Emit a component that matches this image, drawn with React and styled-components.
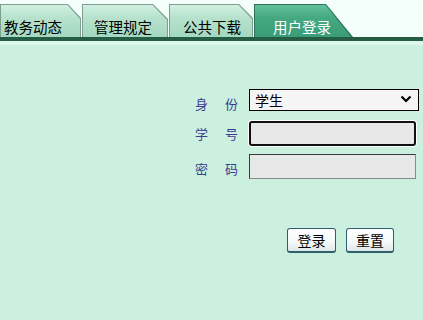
import React from 'react';
import styled, { createGlobalStyle } from 'styled-components';

const GlobalStyle = createGlobalStyle`
  html, body {
    margin: 0;
    padding: 0;
    background: #cbf0e0;
  }
  body {
    font-family: "Noto Sans CJK SC", "Liberation Sans", sans-serif;
  }
`;

const Page = styled.div`
  width: 423px;
  height: 320px;
  overflow: hidden;
  display: flex;
  flex-direction: column;
  background: #cbf0e0;
`;

const TabStrip = styled.div`
  display: flex;
  gap: 1px;
  padding-top: 4px;
  background: #f4fffb;
`;

const Tab = styled.div`
  position: relative;
  width: ${p => p.$width}px;
  height: 33px;
  box-sizing: border-box;
  padding-left: ${p => p.$pad}px;
  font-size: 14.5px;
  line-height: 1;
  color: ${p => (p.$active ? '#ffffff' : '#000000')};
  display: flex;
  align-items: flex-end;
  padding-bottom: 3px;
  background: ${p => (p.$active ? '#2c7457' : '#7d9e90')};
  clip-path: polygon(
    0 0,
    calc(100% - ${p => p.$sx}px) 0,
    100% ${p => p.$sy}px,
    100% 100%,
    0 100%
  );

  &::before {
    content: '';
    position: absolute;
    left: 1px;
    top: 1px;
    right: 1px;
    bottom: 0;
    background: ${p =>
      p.$active
        ? 'linear-gradient(#62c19c, #44a880 40%, #3a9d77)'
        : 'linear-gradient(#d2f0e2, #b6e2cd 40%, #a4d8c0)'};
    clip-path: polygon(
      0 0,
      calc(100% - ${p => p.$sx - 0.5}px) 0,
      100% ${p => p.$sy}px,
      100% 100%,
      0 100%
    );
  }
`;

const TabText = styled.span`
  position: relative;
`;

const Bar = styled.div`
  height: 4px;
  background: #245c44;
`;

const BarShine = styled.div`
  height: 4px;
  background: #dcf7ec;
`;

const Body = styled.div`
  flex: 1;
  display: flex;
  justify-content: flex-end;
  padding: 42px 4px 0 0;
`;

const Form = styled.div`
  display: flex;
  flex-direction: column;
  width: 224px;
`;

const Row = styled.div`
  display: flex;
  align-items: ${p => p.$align || 'center'};
  gap: 11px;
  margin-top: ${p => p.$top || 0}px;
`;

const Label = styled.div`
  width: 43px;
  flex: none;
  display: flex;
  justify-content: space-between;
  font-size: 13px;
  line-height: 14px;
  color: #3c3c8c;
  margin-bottom: ${p => p.$drop || 0}px;
`;

const SelectWrap = styled.div`
  position: relative;
  width: 170px;
  height: 22px;
`;

const Select = styled.select`
  appearance: none;
  width: 100%;
  height: 100%;
  box-sizing: border-box;
  border: 1px solid #000;
  border-radius: 0;
  background: #f5f5f5;
  font-family: "Noto Sans CJK SC", sans-serif;
  font-size: 14px;
  color: #000;
  padding: 0 0 0 5px;
  outline: none;
`;

const Chevron = styled.svg`
  position: absolute;
  right: 7px;
  top: 8px;
  pointer-events: none;
`;

const Input = styled.input`
  width: 167px;
  height: 25px;
  box-sizing: border-box;
  background: #e8e8e8;
  border: ${p => (p.$focus ? '2px solid #111' : '1px solid #3a3a3a')};
  border-right-color: ${p => (p.$focus ? '#111' : '#8a8a8a')};
  border-bottom-color: ${p => (p.$focus ? '#111' : '#8a8a8a')};
  border-radius: ${p => (p.$focus ? '3px' : '0')};
  box-shadow: ${p => (p.$focus ? '0 0 0 1px #fff' : 'none')};
  outline: none;
  padding: 0 4px;
`;

const Buttons = styled.div`
  display: flex;
  gap: 10px;
  padding-left: 92px;
  margin-top: 49px;
`;

const Button = styled.button`
  width: ${p => p.$width}px;
  height: 25px;
  box-sizing: border-box;
  border: 1px solid #2f5f6c;
  border-bottom-width: 2px;
  border-radius: 3px;
  background: linear-gradient(#ffffff, #f4f8f8 60%, #dfe8ea);
  font-family: "Noto Sans CJK SC", sans-serif;
  font-size: 14px;
  color: #000;
  padding: 0;
  line-height: 1;
`;

const tabs = [
  { text: '教务动态', width: 81, pad: 4, sx: 13, sy: 14 },
  { text: '管理规定', width: 86, pad: 12, sx: 15, sy: 15 },
  { text: '公共下载', width: 84, pad: 14, sx: 14, sy: 14 },
  { text: '用户登录', width: 99, pad: 19, sx: 27, sy: 33, active: true },
];

export default function App() {
  return (
    <Page>
      <GlobalStyle />
      <TabStrip>
        {tabs.map(t => (
          <Tab
            key={t.text}
            $width={t.width}
            $pad={t.pad}
            $sx={t.sx}
            $sy={t.sy}
            $active={t.active}
          >
            <TabText>{t.text}</TabText>
          </Tab>
        ))}
      </TabStrip>
      <Bar />
      <BarShine />
      <Body>
        <Form>
          <Row $align="flex-end">
            <Label $drop={-2}>
              <span>身</span>
              <span>份</span>
            </Label>
            <SelectWrap>
              <Select defaultValue="学生">
                <option>学生</option>
                <option>教师</option>
              </Select>
              <Chevron width="12" height="8" viewBox="0 0 12 8">
                <polyline points="1.5,1.5 6,6 10.5,1.5" fill="none" stroke="#000" strokeWidth="2.2" />
              </Chevron>
            </SelectWrap>
          </Row>
          <Row $top={12}>
            <Label>
              <span>学</span>
              <span>号</span>
            </Label>
            <Input $focus />
          </Row>
          <Row $top={8}>
            <Label $drop={-4}>
              <span>密</span>
              <span>码</span>
            </Label>
            <Input type="password" />
          </Row>
          <Buttons>
            <Button $width={49}>登录</Button>
            <Button $width={48}>重置</Button>
          </Buttons>
        </Form>
      </Body>
    </Page>
  );
}
